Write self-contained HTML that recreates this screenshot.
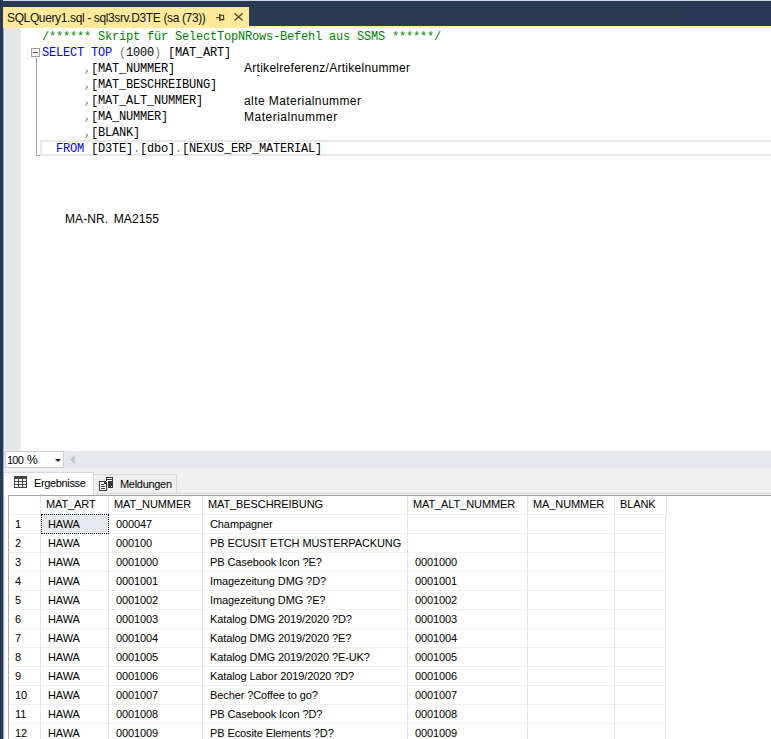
<!DOCTYPE html>
<html><head><meta charset="utf-8">
<style>
*{margin:0;padding:0;box-sizing:border-box}
html,body{width:771px;height:739px;overflow:hidden;background:#fff}
body{position:relative;font-family:"Liberation Sans",sans-serif}
.a{position:absolute}
.code{font-family:"Liberation Mono",monospace;font-size:12px;letter-spacing:-0.2px;white-space:pre;line-height:16px;color:#000}
.kw{color:#0000ff}
.cm{color:#008000}
.gr{color:#808080}
.note{font-family:"Liberation Sans",sans-serif;font-size:12px;white-space:pre;color:#000;line-height:16px}
.g{font-size:11px;letter-spacing:-0.1px;white-space:pre;color:#000;line-height:19px}
.hl{position:absolute;background:#f0f0f0}
.vl{position:absolute;width:1px;background:#e3e3e3}
</style></head><body>
<!-- top frame -->
<div class="a" style="left:0;top:0;width:771px;height:1px;background:#cfd6e5"></div>
<div class="a" style="left:0;top:1px;width:681px;height:27px;background:#293b50"></div>
<div class="a" style="left:681px;top:1px;width:90px;height:27px;background:#293955"></div>
<div class="a" style="left:0;top:0;width:3px;height:739px;background:#293955"></div>
<!-- tab -->
<div class="a" style="left:3px;top:7px;width:246px;height:21px;background:#ffea9c"></div>
<div class="a" style="left:249px;top:26px;width:522px;height:2px;background:#fff29d"></div>
<div class="a" style="left:7px;top:10px;font-size:12px;letter-spacing:-0.37px;white-space:pre;color:#111;line-height:16px">SQLQuery1.sql - sql3srv.D3TE (sa (73))</div>
<!-- pin/close -->
<svg class="a" style="left:210px;top:8px" width="40" height="18" viewBox="0 0 40 18">
<g fill="#554a30"><rect x="6" y="9" width="3.5" height="1.2"/><rect x="9" y="6" width="1.6" height="7"/><rect x="9" y="6.8" width="5" height="1.1"/><rect x="13" y="6.8" width="1.2" height="5.2"/><rect x="9" y="10.8" width="5.2" height="1.6"/></g>
<path d="M24.6 5.3L32.6 12.6M32.6 5.3L24.6 12.6" fill="none" stroke="#554a30" stroke-width="1.35"/>
</svg>
<!-- editor -->
<div class="a" style="left:3px;top:28px;width:1px;height:711px;background:#98a8cb"></div>
<div class="a" style="left:4px;top:28px;width:1px;height:423px;background:#ebebeb"></div>
<div class="a" style="left:5px;top:28px;width:16px;height:423px;background:#e6e7e8"></div>
<!-- current line box -->
<div class="a" style="left:40px;top:140px;width:731px;height:16px;border:2px solid #e7e8ee;border-right:none"></div>
<!-- outlining -->
<div class="a" style="left:31px;top:48px;width:9px;height:9px;border:1px solid #a0a0a0;background:#fff"></div>
<div class="a" style="left:33px;top:52px;width:5px;height:1px;background:#505050"></div>
<div class="a" style="left:36px;top:58px;width:1px;height:98px;background:#a0a0a0"></div>
<div class="a" style="left:36px;top:155px;width:4px;height:1px;background:#a0a0a0"></div>
<div class="a code" style="left:42px;top:29px"><span class="cm">/****** Skript für SelectTopNRows-Befehl aus SSMS ******/</span>
<span class="kw">SELECT</span> <span class="kw">TOP</span> <span class="gr">(</span>1000<span class="gr">)</span> [MAT_ART]
      <span class="gr">,</span>[MAT_NUMMER]
      <span class="gr">,</span>[MAT_BESCHREIBUNG]
      <span class="gr">,</span>[MAT_ALT_NUMMER]
      <span class="gr">,</span>[MA_NUMMER]
      <span class="gr">,</span>[BLANK]
  <span class="kw">FROM</span> [D3TE]<span class="gr">.</span>[dbo]<span class="gr">.</span>[NEXUS_ERP_MATERIAL]</div>
<div class="a note" style="left:244px;top:60px;letter-spacing:0.28px">Artikelreferenz/Artikelnummer</div>
<div class="a" style="left:257px;top:75px;width:2px;height:1px;background:#666"></div>
<div class="a note" style="left:244px;top:93px;letter-spacing:0.42px">alte Materialnummer</div>
<div class="a note" style="left:244px;top:109px;letter-spacing:0.5px">Materialnummer</div>
<div class="a note" style="left:65px;top:211px;letter-spacing:0.1px;word-spacing:-0.7px">MA-NR.  MA2155</div>

<!-- zoom bar -->
<div class="a" style="left:4px;top:451px;width:767px;height:17px;background:#e7e8ec"></div>
<div class="a" style="left:5px;top:451px;width:59px;height:17px;border:1px solid #c5cde0;background:#fff"></div>
<div class="a" style="left:7px;top:455px;font-size:11px;white-space:pre;color:#000;line-height:11px;letter-spacing:-0.8px">100</div><div class="a" style="left:27px;top:454px;font-size:12px;white-space:pre;color:#000;line-height:12px">%</div>
<svg class="a" style="left:55px;top:459px" width="6" height="3" viewBox="0 0 6 3"><path d="M0 0H6L3 3Z" fill="#1e1e1e"/></svg>
<svg class="a" style="left:70px;top:455px" width="5" height="9" viewBox="0 0 5 9"><path d="M5 0V9L0 4.5Z" fill="#c2c4cc"/></svg>
<!-- results area -->
<div class="a" style="left:4px;top:468px;width:767px;height:271px;background:#f0f0f0"></div>
<!-- tabs -->
<div class="a" style="left:93px;top:474px;width:84px;height:20px;border:1px solid #d9d9d9;border-left:none;background:#efefef"></div>
<div class="a" style="left:4px;top:472px;width:90px;height:23px;border-top:1px solid #d9d9d9;border-right:1px solid #dcdcdc;background:#fff"></div>
<svg class="a" style="left:14px;top:476px" width="13" height="12" viewBox="0 0 13 12">
<rect x="0" y="0" width="13" height="12" fill="#424242"/>
<g fill="#fff"><rect x="1" y="3" width="3" height="2"/><rect x="5" y="3" width="3" height="2"/><rect x="9" y="3" width="3" height="2"/>
<rect x="1" y="6" width="3" height="2"/><rect x="5" y="6" width="3" height="2"/><rect x="9" y="6" width="3" height="2"/>
<rect x="1" y="9" width="3" height="2"/><rect x="5" y="9" width="3" height="2"/><rect x="9" y="9" width="3" height="2"/></g>
</svg>
<div class="a" style="left:34px;top:477px;font-size:11px;letter-spacing:-0.35px;white-space:pre;color:#000;line-height:12px">Ergebnisse</div>
<svg class="a" style="left:96px;top:474px" width="20" height="20" viewBox="0 0 20 20" shape-rendering="crispEdges">
<rect x="10" y="3" width="7" height="4" fill="#383838"/>
<rect x="12" y="7" width="5" height="7" fill="#383838"/>
<rect x="11" y="4" width="5" height="1" fill="#fff"/>
<rect x="11" y="6" width="5" height="1" fill="#fff"/>
<rect x="15" y="12" width="1" height="1" fill="#fff"/>
<rect x="10" y="7" width="2" height="11" fill="#efefef"/>
<path d="M3 7H9L11 9V17H3Z" fill="#383838"/>
<path d="M4 8H8V10H10V16H4Z" fill="#fff"/>
<rect x="5" y="10" width="3" height="1" fill="#383838"/>
<rect x="5" y="12" width="4" height="1" fill="#383838"/>
<rect x="5" y="14" width="4" height="1" fill="#383838"/>
</svg>
<div class="a" style="left:120px;top:478px;font-size:11px;letter-spacing:-0.3px;white-space:pre;color:#000;line-height:12px">Meldungen</div>
<!-- grid -->
<div class="a" style="left:93px;top:493px;width:678px;height:1px;background:#dadada"></div>
<div class="a" style="left:4px;top:495px;width:1px;height:244px;background:#f2f2f2"></div>
<div class="a" style="left:5px;top:495px;width:3px;height:244px;background:#fff"></div>
<div class="a" style="left:8px;top:495px;width:763px;height:244px;background:#fff;border-top:1px solid #a0a3aa;border-left:1px solid #aaaaaa"></div>
<div class="hl" style="left:9px;top:514px;width:658px;height:1px;background:#f0f0f0"></div>
<div class="hl" style="left:9px;top:533px;width:656px;height:1px;background:#f0f0f0"></div>
<div class="hl" style="left:9px;top:552px;width:656px;height:1px;background:#f0f0f0"></div>
<div class="hl" style="left:9px;top:571px;width:656px;height:1px;background:#f0f0f0"></div>
<div class="hl" style="left:9px;top:590px;width:656px;height:1px;background:#f0f0f0"></div>
<div class="hl" style="left:9px;top:609px;width:656px;height:1px;background:#f0f0f0"></div>
<div class="hl" style="left:9px;top:628px;width:656px;height:1px;background:#f0f0f0"></div>
<div class="hl" style="left:9px;top:647px;width:656px;height:1px;background:#f0f0f0"></div>
<div class="hl" style="left:9px;top:666px;width:656px;height:1px;background:#f0f0f0"></div>
<div class="hl" style="left:9px;top:685px;width:656px;height:1px;background:#f0f0f0"></div>
<div class="hl" style="left:9px;top:704px;width:656px;height:1px;background:#f0f0f0"></div>
<div class="hl" style="left:9px;top:723px;width:656px;height:1px;background:#f0f0f0"></div>
<div class="hl" style="left:9px;top:742px;width:656px;height:1px;background:#f0f0f0"></div>
<div class="vl" style="left:40px;top:496px;height:243px"></div>
<div class="vl" style="left:108px;top:496px;height:243px"></div>
<div class="vl" style="left:202px;top:496px;height:243px"></div>
<div class="vl" style="left:407px;top:496px;height:243px"></div>
<div class="vl" style="left:527px;top:496px;height:243px"></div>
<div class="vl" style="left:614px;top:496px;height:243px"></div>
<div class="vl" style="left:666px;top:496px;height:18px"></div><div class="vl" style="left:665px;top:514px;height:225px"></div>
<div class="a" style="left:42px;top:515px;width:66px;height:18px;background:#e6e9ee"></div>
<div class="a" style="left:41px;top:514px;width:68px;height:20px;border:1px dotted #000"></div>
<div class="a g" style="left:46px;top:495px">MAT_ART</div>
<div class="a g" style="left:114px;top:495px">MAT_NUMMER</div>
<div class="a g" style="left:208px;top:495px">MAT_BESCHREIBUNG</div>
<div class="a g" style="left:413px;top:495px">MAT_ALT_NUMMER</div>
<div class="a g" style="left:533px;top:495px">MA_NUMMER</div>
<div class="a g" style="left:620px;top:495px">BLANK</div>
<div class="a g" style="left:15px;top:515px">1</div>
<div class="a g" style="left:48px;top:515px">HAWA</div>
<div class="a g" style="left:116px;top:515px">000047</div>
<div class="a g" style="left:210px;top:515px">Champagner</div>
<div class="a g" style="left:15px;top:534px">2</div>
<div class="a g" style="left:48px;top:534px">HAWA</div>
<div class="a g" style="left:116px;top:534px">000100</div>
<div class="a g" style="left:210px;top:534px">PB ECUSIT ETCH MUSTERPACKUNG</div>
<div class="a g" style="left:15px;top:553px">3</div>
<div class="a g" style="left:48px;top:553px">HAWA</div>
<div class="a g" style="left:116px;top:553px">0001000</div>
<div class="a g" style="left:210px;top:553px">PB Casebook Icon ?E?</div>
<div class="a g" style="left:415px;top:553px">0001000</div>
<div class="a g" style="left:15px;top:572px">4</div>
<div class="a g" style="left:48px;top:572px">HAWA</div>
<div class="a g" style="left:116px;top:572px">0001001</div>
<div class="a g" style="left:210px;top:572px">Imagezeitung DMG ?D?</div>
<div class="a g" style="left:415px;top:572px">0001001</div>
<div class="a g" style="left:15px;top:591px">5</div>
<div class="a g" style="left:48px;top:591px">HAWA</div>
<div class="a g" style="left:116px;top:591px">0001002</div>
<div class="a g" style="left:210px;top:591px">Imagezeitung DMG ?E?</div>
<div class="a g" style="left:415px;top:591px">0001002</div>
<div class="a g" style="left:15px;top:610px">6</div>
<div class="a g" style="left:48px;top:610px">HAWA</div>
<div class="a g" style="left:116px;top:610px">0001003</div>
<div class="a g" style="left:210px;top:610px">Katalog DMG 2019/2020 ?D?</div>
<div class="a g" style="left:415px;top:610px">0001003</div>
<div class="a g" style="left:15px;top:629px">7</div>
<div class="a g" style="left:48px;top:629px">HAWA</div>
<div class="a g" style="left:116px;top:629px">0001004</div>
<div class="a g" style="left:210px;top:629px">Katalog DMG 2019/2020 ?E?</div>
<div class="a g" style="left:415px;top:629px">0001004</div>
<div class="a g" style="left:15px;top:648px">8</div>
<div class="a g" style="left:48px;top:648px">HAWA</div>
<div class="a g" style="left:116px;top:648px">0001005</div>
<div class="a g" style="left:210px;top:648px">Katalog DMG 2019/2020 ?E-UK?</div>
<div class="a g" style="left:415px;top:648px">0001005</div>
<div class="a g" style="left:15px;top:667px">9</div>
<div class="a g" style="left:48px;top:667px">HAWA</div>
<div class="a g" style="left:116px;top:667px">0001006</div>
<div class="a g" style="left:210px;top:667px">Katalog Labor 2019/2020 ?D?</div>
<div class="a g" style="left:415px;top:667px">0001006</div>
<div class="a g" style="left:15px;top:686px">10</div>
<div class="a g" style="left:48px;top:686px">HAWA</div>
<div class="a g" style="left:116px;top:686px">0001007</div>
<div class="a g" style="left:210px;top:686px">Becher ?Coffee to go?</div>
<div class="a g" style="left:415px;top:686px">0001007</div>
<div class="a g" style="left:15px;top:705px">11</div>
<div class="a g" style="left:48px;top:705px">HAWA</div>
<div class="a g" style="left:116px;top:705px">0001008</div>
<div class="a g" style="left:210px;top:705px">PB Casebook Icon ?D?</div>
<div class="a g" style="left:415px;top:705px">0001008</div>
<div class="a g" style="left:15px;top:724px">12</div>
<div class="a g" style="left:48px;top:724px">HAWA</div>
<div class="a g" style="left:116px;top:724px">0001009</div>
<div class="a g" style="left:210px;top:724px">PB Ecosite Elements ?D?</div>
<div class="a g" style="left:415px;top:724px">0001009</div>
</body></html>
